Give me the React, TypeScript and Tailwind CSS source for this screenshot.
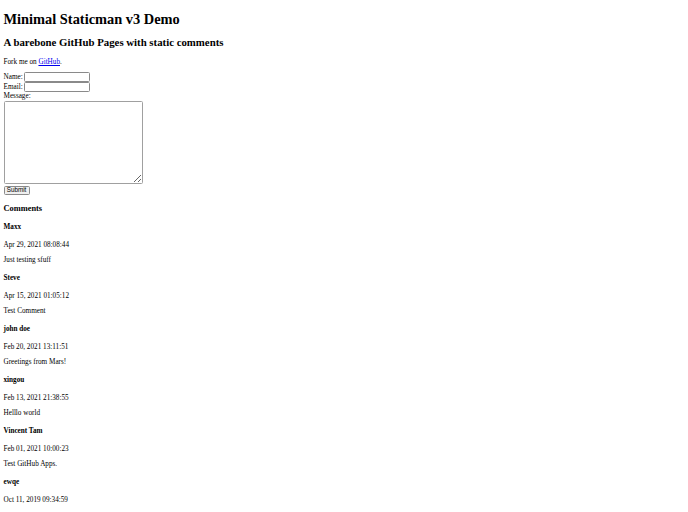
const comments = [
  { name: "Maxx", date: "Apr 29, 2021 08:08:44", text: "Just testing sfuff" },
  { name: "Steve", date: "Apr 15, 2021 01:05:12", text: "Test Comment" },
  { name: "john doe", date: "Feb 20, 2021 13:11:51", text: "Greetings from Mars!" },
  { name: "xingou", date: "Feb 13, 2021 21:38:55", text: "Helllo world" },
  { name: "Vincent Tam", date: "Feb 01, 2021 10:00:23", text: "Test GitHub Apps." },
  { name: "ewqe", date: "Oct 11, 2019 09:34:59", text: "" },
];

function Field({ label }: { label: string }) {
  return (
    <div className="flex h-[10px] items-center gap-[1.5px]">
      <label className="leading-[8px]">{label}</label>
      <input
        type="text"
        className="h-[9.5px] w-[66px] rounded-[1.5px] border-[0.75px] border-[#8a8a8a] bg-white"
      />
    </div>
  );
}

export default function App() {
  return (
    <div className="min-h-[512px] bg-white px-[3.5px] pb-[20px] pt-[1px] font-['Liberation_Serif',serif] text-[7.2px] leading-[8px] text-black">
      <h1 className="mt-[9.6px] text-[14.4px] font-bold leading-[16.5px]">
        Minimal Staticman v3 Demo
      </h1>
      <h2 className="mt-[9.4px] text-[10.8px] font-bold leading-[12.4px]">
        A barebone GitHub Pages with static comments
      </h2>
      <p className="mt-[8.8px]">
        Fork me on{" "}
        <a href="#" className="text-[#0000ee] underline">
          GitHub
        </a>
        .
      </p>

      <form className="mt-[6.2px]" onSubmit={(e) => e.preventDefault()}>
        <Field label="Name:" />
        <Field label="Email:" />
        <div className="h-[8.5px] leading-[8px]">Message:</div>
        <textarea className="mt-[0.3px] block h-[83.5px] w-[139px] resize rounded-[1.5px] border-[0.75px] border-[#a0a0a0] bg-white" />
        <button
          type="submit"
          className="mt-[1.5px] flex h-[9.5px] w-[26px] items-center justify-center rounded-[1.5px] border-[0.75px] border-[#8a8a8a] bg-[#efefef] font-['Liberation_Sans',sans-serif] text-[6.3px] leading-none"
        >
          Submit
        </button>
      </form>

      <h3 className="mt-[9.2px] text-[8.4px] font-bold leading-[9.4px]">
        Comments
      </h3>
      {comments.map((c, i) => (
        <div key={c.name + c.date}>
          <h4 className={i === 0 ? "mt-[9px] font-bold" : "mt-[10px] font-bold"}>
            {c.name}
          </h4>
          <p className="mt-[10px]">{c.date}</p>
          {c.text && <p className="mt-[7px]">{c.text}</p>}
        </div>
      ))}
    </div>
  );
}
